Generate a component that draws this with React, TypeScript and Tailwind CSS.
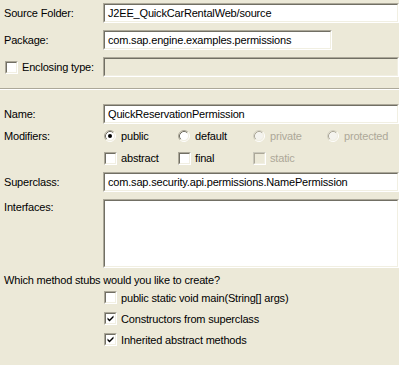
import React from "react";

const Field = ({ w, h = 20, text, disabled }: { w: string; h?: number; text?: string; disabled?: boolean }) => (
  <div
    className={`${w} border border-t-[#ACA899] border-l-[#ACA899] border-b-white border-r-white`}
    style={{ height: h }}
  >
    <div
      className={`h-full border border-t-[#716F64] border-l-[#716F64] border-b-[#F1EFE2] border-r-[#F1EFE2] ${
        disabled ? "bg-[#ECE9D8]" : "bg-white"
      } flex items-start pl-[3px]`}
    >
      {text !== undefined && <span className="leading-[16px] whitespace-nowrap">{text}</span>}
    </div>
  </div>
);

const Check = ({ checked, disabled }: { checked?: boolean; disabled?: boolean }) => (
  <div
    className={`w-[13px] h-[13px] shrink-0 border ${
      disabled ? "border-t-[#CAC8BB] border-l-[#CAC8BB]" : "border-t-[#ACA899] border-l-[#ACA899]"
    } border-b-white border-r-white`}
  >
    <div
      className={`w-full h-full border ${
        disabled ? "border-t-[#ACA899] border-l-[#ACA899] bg-[#ECE9D8]" : "border-t-[#716F64] border-l-[#716F64] bg-white"
      } border-b-[#F1EFE2] border-r-[#F1EFE2] relative`}
    >
      {checked && (
        <svg width="9" height="9" viewBox="0 0 9 9" className="absolute left-0 top-0">
          <path d="M1.5 3.5 L3.5 5.5 L7.5 1.5 L7.5 3.5 L3.5 7.5 L1.5 5.5 Z" fill="#000" />
        </svg>
      )}
    </div>
  </div>
);

const Radio = ({ selected, disabled }: { selected?: boolean; disabled?: boolean }) => (
  <svg width="12" height="12" viewBox="0 0 12 12" className="shrink-0">
    <circle cx="6" cy="6" r="4.5" fill={disabled ? "#F4F3EE" : "#fff"} />
    <path d="M2.11 9.89 A5.5 5.5 0 0 1 9.89 2.11" fill="none" stroke={disabled ? "#D5D2C4" : "#ACA899"} strokeWidth="1" />
    <path d="M2.82 9.18 A4.5 4.5 0 0 1 9.18 2.82" fill="none" stroke={disabled ? "#ACA899" : "#716F64"} strokeWidth="1" />
    <path d="M9.89 2.11 A5.5 5.5 0 0 1 2.11 9.89" fill="none" stroke="#fff" strokeWidth="1" />
    <path d="M9.18 2.82 A4.5 4.5 0 0 1 2.82 9.18" fill="none" stroke="#F1EFE2" strokeWidth="1" />
    {selected && <circle cx="6" cy="6" r="2" fill="#000" />}
  </svg>
);

const Label = ({ children }: { children: React.ReactNode }) => (
  <div className="w-[103px] shrink-0 pl-[4px] whitespace-nowrap">{children}</div>
);

export default function App() {
  return (
    <div className="w-[399px] h-[365px] bg-[#ECE9D8] font-['Liberation_Sans',Arial,sans-serif] text-[11px] tracking-[-0.18px] leading-[14px] text-black pt-[3px] overflow-hidden">
      <div className="flex items-center h-[20px]">
        <Label>Source Folder:</Label>
        <Field w="w-[296px]" text="J2EE_QuickCarRentalWeb/source" />
      </div>
      <div className="flex items-center h-[20px] mt-[7px]">
        <Label>Package:</Label>
        <Field w="w-[229px]" text="com.sap.engine.examples.permissions" />
      </div>
      <div className="flex items-center h-[20px] mt-[7px]">
        <div className="w-[103px] shrink-0 pl-[5px] flex items-center gap-[4px] whitespace-nowrap">
          <Check />
          <span>Enclosing type:</span>
        </div>
        <Field w="w-[296px]" disabled text="" />
      </div>
      <div className="mt-[11px] h-[2px] border-t border-t-[#ACA899] border-b border-b-white" />
      <div className="flex items-center h-[20px] mt-[14px]">
        <Label>Name:</Label>
        <Field w="w-[296px]" text="QuickReservationPermission" />
      </div>
      <div className="flex items-center h-[16px] mt-[4px]">
        <Label>Modifiers:</Label>
        <div className="flex">
          <div className="w-[75px] flex items-center gap-[5px] pl-[1px]">
            <Radio selected />
            <span>public</span>
          </div>
          <div className="w-[75px] flex items-center gap-[5px]">
            <Radio />
            <span>default</span>
          </div>
          <div className="w-[74px] flex items-center gap-[5px] text-[#ACA899]">
            <Radio disabled />
            <span>private</span>
          </div>
          <div className="flex items-center gap-[5px] text-[#ACA899]">
            <Radio disabled />
            <span>protected</span>
          </div>
        </div>
      </div>
      <div className="flex items-center h-[16px] mt-[6px]">
        <div className="w-[104px] shrink-0" />
        <div className="flex">
          <div className="w-[74px] flex items-center gap-[4px]">
            <Check />
            <span>abstract</span>
          </div>
          <div className="w-[75px] flex items-center gap-[4px]">
            <Check />
            <span>final</span>
          </div>
          <div className="flex items-center gap-[4px] text-[#ACA899]">
            <Check disabled />
            <span>static</span>
          </div>
        </div>
      </div>
      <div className="flex items-center h-[20px] mt-[6px]">
        <Label>Superclass:</Label>
        <Field w="w-[296px]" text="com.sap.security.api.permissions.NamePermission" />
      </div>
      <div className="flex items-start mt-[7px]">
        <div className="w-[103px] shrink-0 pl-[4px] pt-[1px]">Interfaces:</div>
        <Field w="w-[296px]" h={69} />
      </div>
      <div className="mt-[5px] pl-[4px] whitespace-nowrap">Which method stubs would you like to create?</div>
      <div className="pl-[104px]">
        <div className="flex items-center h-[21px] gap-[4px]">
          <Check />
          <span>public static void main(String[] args)</span>
        </div>
        <div className="flex items-center h-[21px] gap-[4px]">
          <Check checked />
          <span>Constructors from superclass</span>
        </div>
        <div className="flex items-center h-[21px] gap-[4px]">
          <Check checked />
          <span>Inherited abstract methods</span>
        </div>
      </div>
    </div>
  );
}
